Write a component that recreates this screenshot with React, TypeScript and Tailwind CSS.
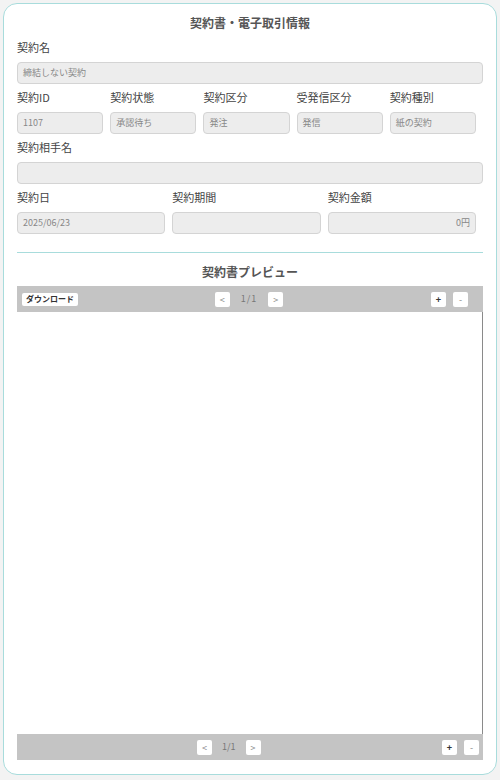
import React from "react";

const F = { fontFamily: '"Noto Sans CJK JP", "Noto Sans", sans-serif' };

function Field({ label, value, right }: { label: string; value?: string; right?: boolean }) {
  return (
    <div className="flex flex-col">
      <div className="h-[16px] text-[11px] leading-[16px] text-[#444]">{label}</div>
      <div
        className={`mt-[7px] h-[22px] rounded-[4px] border border-[#d4d4d4] bg-[#ededed] px-[5px] text-[9px] leading-[20px] text-[#888] ${right ? "text-right" : ""}`}
      >
        {value}
      </div>
    </div>
  );
}

function SmallBtn({ children, dark }: { children: React.ReactNode; dark?: boolean }) {
  return (
    <div
      className={`flex h-[15px] w-[15px] items-center justify-center rounded-[2px] bg-white text-[9px] leading-none ${dark ? "font-bold text-[#333]" : "text-[#888]"}`}
    >
      {children}
    </div>
  );
}

export default function App() {
  return (
    <div style={F} className="h-[780px] w-[500px] bg-[#f3f3f3] px-[3px] pt-[3px]">
      <div className="flex h-[772px] flex-col rounded-[14px] border border-[#a8dcdc] bg-white px-[13px]">
        <div className="pt-[10px] text-center text-[12px] font-bold leading-[18px] text-[#555]">
          契約書・電子取引情報
        </div>
        <div className="mt-[7px] flex flex-col gap-[5px]">
          <Field label="契約名" value="締結しない契約" />
          <div className="grid grid-cols-5">
            <div className="mr-[7px]"><Field label="契約ID" value="1107" /></div>
            <div className="mr-[7px]"><Field label="契約状態" value="承認待ち" /></div>
            <div className="mr-[7px]"><Field label="契約区分" value="発注" /></div>
            <div className="mr-[7px]"><Field label="受発信区分" value="発信" /></div>
            <div className="mr-[7px]"><Field label="契約種別" value="紙の契約" /></div>
          </div>
          <Field label="契約相手名" value="" />
          <div className="grid grid-cols-3">
            <div className="mr-[7px]"><Field label="契約日" value="2025/06/23" /></div>
            <div className="mr-[7px]"><Field label="契約期間" value="" /></div>
            <div className="mr-[7px]"><Field label="契約金額" value="0円" right /></div>
          </div>
        </div>
        <div className="mt-[18px] h-px bg-[#a8dcdc]" />
        <div className="mt-[10px] text-center text-[12px] font-bold leading-[18px] text-[#555]">
          契約書プレビュー
        </div>
        <div className="mt-[5px] flex flex-1 flex-col pb-[14px]">
          <div className="grid h-[26px] grid-cols-3 items-center bg-[#c4c4c4] pl-[5px] pr-[15px]">
            <div className="flex">
              <div className="flex h-[13px] items-center rounded-[2px] bg-white px-[4px] text-[8px] font-bold leading-none text-[#333]">
                ダウンロード
              </div>
            </div>
            <div className="ml-[8px] flex items-center justify-center gap-[11px]">
              <SmallBtn>&lt;</SmallBtn>
              <span className="text-[9px] tracking-[1px] text-[#777]">1/1</span>
              <SmallBtn>&gt;</SmallBtn>
            </div>
            <div className="flex justify-end gap-[7px]">
              <SmallBtn dark>+</SmallBtn>
              <SmallBtn>-</SmallBtn>
            </div>
          </div>
          <div className="flex-1 border-r border-[#8a8a8a] bg-white" />
          <div className="flex h-[26px] items-center bg-[#c4c4c4] pl-[180px] pr-[4px]">
            <div className="flex items-center gap-[10px]">
              <SmallBtn>&lt;</SmallBtn>
              <span className="text-[9px] text-[#777]">1/1</span>
              <SmallBtn>&gt;</SmallBtn>
            </div>
            <div className="ml-auto flex gap-[7px]">
              <SmallBtn dark>+</SmallBtn>
              <SmallBtn>-</SmallBtn>
            </div>
          </div>
        </div>
      </div>
    </div>
  );
}
